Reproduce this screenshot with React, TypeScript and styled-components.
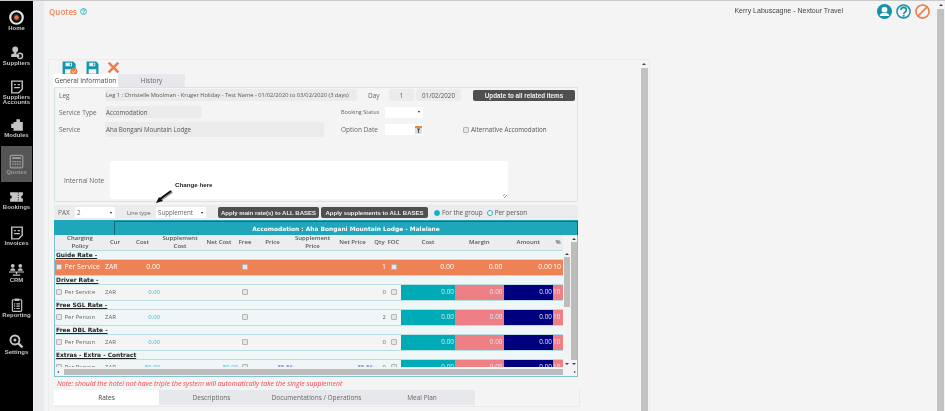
import React from "react";
import styled, { createGlobalStyle } from "styled-components";

const Global = createGlobalStyle`
  html, body { margin: 0; padding: 0; height: 100%; overflow: hidden; background: #f4f4f4; }
  * { box-sizing: border-box; }
  #root { font-family: "Open Sans", "Liberation Sans", sans-serif; font-size: 6.5px; color: #555; }
`;

const Shell = styled.div`
  display: flex; width: 945px; height: 411px; overflow: hidden;
  border-top: 1px solid #c9c9c9; background: #f4f4f4; filter: blur(0.3px);
`;
const Sidebar = styled.nav`
  width: 33px; flex: none; background: #000; display: flex; flex-direction: column; padding-top: 1px;
`;
const NavItem = styled.div<{ $active?: boolean }>`
  height: 36px; flex: none; display: flex; flex-direction: column; align-items: center; justify-content: center;
  margin: 0 1px; background: ${p => (p.$active ? "#555" : "transparent")};
  color: ${p => (p.$active ? "#9a9a9a" : "#c4c4c4")};
  svg { display: block; flex: none; }
`;
const NavLabel = styled.span`
  font-size: 6px; font-weight: 700; line-height: 5px; text-align: center; margin-top: 1px; white-space: nowrap;
  color: inherit; font-family: "Liberation Sans", sans-serif;
`;
const Gutter = styled.div`width: 11px; flex: none; background: #e9ebee;`;
const Main = styled.main`flex: 1; min-width: 0; padding-left: 4px; display: flex; flex-direction: column;`;
const Header = styled.header`
  height: 58px; flex: none; display: flex; align-items: flex-start; padding: 3px 0 0 1px;
`;
const Title = styled.h1`
  margin: 2px 0 0; font-size: 8px; font-weight: 600; line-height: 11px; color: #f0855c;
  display: flex; align-items: center; gap: 3px; font-family: "Open Sans", sans-serif;
`;
const UserBox = styled.div`margin-left: auto; display: flex; align-items: flex-start; padding-right: 6px;`;
const UserName = styled.span`
  font-size: 7px; line-height: 9px; color: #444; margin: 2px 34px 0 0; font-family: "Liberation Sans", sans-serif;
`;
const UserIcons = styled.div`display: flex; gap: 4px; svg { display: block; }`;
const PageScroll = styled.div`
  width: 9px; flex: none; display: flex; flex-direction: column; align-items: center; background: #f4f4f4;
`;
const PageThumb = styled.div`width: 7px; flex: 1; background: #c2c2c2; margin-top: 1px;`;
const Arrow = styled.span<{ $dir?: string }>`
  width: 0; height: 0; flex: none;
  border-left: 2px solid transparent; border-right: 2px solid transparent;
  ${p => p.$dir === "down" ? "border-top: 2px solid #444;" : "border-bottom: 2px solid #444;"}
`;
const ArrowBox = styled.div`height: 7px; flex: none; display: flex; align-items: center; justify-content: center; width: 100%;`;

const Panel = styled.section`
  position: relative; width: 602px; flex: 1; display: flex; border: 1px solid #ececec; border-bottom: 0; margin-top: 0;
`;
const PanelBody = styled.div`flex: 1; min-width: 0; padding-left: 5px;`;
const PanelScroll = styled.div`
  width: 8px; flex: none; margin-right: 1px; display: flex; flex-direction: column; align-items: center;
`;
const Toolbar = styled.div`
  height: 14px; display: flex; align-items: flex-start; padding: 1px 0 0 8px; gap: 8px; svg { display: block; }
`;
const Wrap = styled.div`width: 526px;`;
const TabRow = styled.div`display: flex; height: 13px;`;
const TabBtn = styled.div<{ $w: number; $active?: boolean }>`
  width: ${p => p.$w}px; display: flex; align-items: center; justify-content: center; white-space: nowrap;
  background: ${p => (p.$active ? "#fff" : "#e7e8eb")};
  color: ${p => (p.$active ? "#444" : "#666")};
  font-size: 6.5px;
`;
const TopTabs = styled(TabRow)`margin-left: -1px;`;
const FormBox = styled.div`
  width: 524px; height: 115px; border: 1px solid #d3e6e6; padding: 1px 0 0 4px;
`;
const FormRow = styled.div<{ $h: number; $mt?: number }>`
  display: flex; align-items: center; height: ${p => p.$h}px; margin-top: ${p => p.$mt ?? 0}px;
`;
const Label = styled.label<{ $w: number; $ml?: number; $pl?: number; $fs?: number }>`
  width: ${p => p.$w}px; margin-left: ${p => p.$ml ?? 0}px; padding-left: ${p => p.$pl ?? 0}px; flex: none; color: #666;
  font-size: ${p => p.$fs ?? 6.5}px; white-space: nowrap;
`;
const Field = styled.div<{ $w: number; $ml?: number; $center?: boolean; $fs?: number }>`
  width: ${p => p.$w}px; height: 100%; margin-left: ${p => p.$ml ?? 0}px; flex: none; background: #ebebeb; border-radius: 2px;
  display: flex; align-items: center; padding: 0 1px; white-space: nowrap; overflow: hidden; color: #555;
  font-size: ${p => p.$fs ?? 6.2}px;
  justify-content: ${p => (p.$center ? "center" : "flex-start")};
`;
const DarkBtn = styled.button<{ $w: number; $ml?: number; $fs?: number }>`
  width: ${p => p.$w}px; margin-left: ${p => p.$ml ?? 0}px; height: 11px; flex: none; background: #4f4f4f; color: #eee;
  border: 0; border-radius: 2px; padding: 0; font: 700 ${p => p.$fs ?? 6.3}px "Liberation Sans", sans-serif; white-space: nowrap;
`;
const SelectBox = styled.div<{ $w: number; $ml?: number }>`
  width: ${p => p.$w}px; margin-left: ${p => p.$ml ?? 0}px; height: 11px; flex: none; background: #fff; border-radius: 1px;
  display: flex; align-items: center; padding: 0 3px 0 2px; color: #666; font-size: 6.2px;
  &::after { content: ""; margin-left: auto; border-left: 1.5px solid transparent; border-right: 1.5px solid transparent; border-top: 2.5px solid #222; }
`;
const DateBox = styled.div<{ $w: number }>`
  width: ${p => p.$w}px; height: 11px; flex: none; background: #fff; display: flex; justify-content: flex-end; align-items: center; padding-right: 1px;
  svg { display: block; }
`;
const Check = styled.span<{ $ml?: number }>`
  display: inline-block; width: 6px; height: 6px; flex: none; margin-left: ${p => p.$ml ?? 0}px;
  background: #e6e6e6; border: 1px solid #b5b5b5; border-radius: 1px;
`;
const Note = styled.div`
  position: relative; width: 398px; height: 38px; flex: none; background: #fff; border-radius: 2px;
  &::after { content: ""; position: absolute; right: 1px; bottom: 1px; width: 4px; height: 4px;
    background: repeating-linear-gradient(135deg, transparent 0 1px, #999 1px 2px); }
`;
const AltLabel = styled.span`margin-left: 2px; color: #555; font-size: 6.3px; white-space: nowrap;`;
const Callout = styled.div`
  position: absolute; left: 126px; top: 120px; font: 700 6.2px/9px "Liberation Sans", sans-serif; color: #222; white-space: nowrap;
`;
const CalloutArrow = styled.svg`position: absolute; left: 107px; top: 130px; display: block;`;
const PaxBar = styled.div`
  width: 524px; height: 15px; margin-top: 3px; background: #ececee; display: flex; align-items: center; padding-left: 4px;
`;
const Radio = styled.span<{ $on?: boolean; $ml: number }>`
  width: 6px; height: 6px; border-radius: 50%; flex: none; margin-left: ${p => p.$ml}px; margin-right: 2px;
  background: ${p => (p.$on ? "#0fb0cc" : "#fff")}; border: 1px solid #19b3cc;
`;
const RadioText = styled.span`color: #555; white-space: nowrap; font-size: 6.4px;`;

const Frame = styled.div`
  width: 524px; height: 157px; border: 1px solid #7fc4cf; border-top: 0; display: flex; flex-direction: column; background: #f4f4f4;
`;
const TitleBar = styled.div`
  height: 15px; flex: none; display: flex; background: #1fa6ba; margin: 0 -1px;
`;
const TitleLeft = styled.div`width: 60px; flex: none;`;
const TitleMain = styled.div`
  flex: 1; margin-top: 1px; border: 1px solid #0d6b79; border-bottom: 0; color: #fff; font-weight: 700; font-size: 5.9px;
  display: flex; align-items: center; justify-content: center; font-family: "DejaVu Sans", sans-serif;
`;
const TableWrap = styled.div`flex: 1; min-height: 0; display: flex; flex-direction: column;`;
const TableTop = styled.div`flex: 1; min-height: 0; display: flex;`;
const TableInner = styled.div`flex: none; width: 508px; overflow: hidden; display: flex; flex-direction: column;`;
const cols = "50px 20px 35px 40px 38px 14px 41px 39px 41px 13px 15px 54px 48.5px 49.5px 10px";
const HeadRow = styled.div`
  display: grid; grid-template-columns: ${cols}; height: 15px; flex: none; background: #ebedef; align-items: center;
`;
const HeadCell = styled.div`
  text-align: center; font-size: 6px; line-height: 7.5px; color: #555; font-weight: 600; white-space: nowrap;
`;
const GroupRow = styled.div`
  height: 10px; flex: none; background: #eef6f7; color: #222; font-weight: 700; font-size: 5.9px; text-decoration: underline;
  padding-left: 1px; display: flex; align-items: center; border-top: 1px solid #b9dde1; border-bottom: 1px solid #b9dde1;
  font-family: "DejaVu Sans", sans-serif;
`;
const DataRow = styled.div<{ $tone: string }>`
  display: grid; grid-template-columns: ${cols}; height: 15px; flex: none; align-items: stretch;
  background: ${p => (p.$tone === "hot" ? "#ee8254" : p.$tone === "alt" ? "#f4f4f4" : "#eef6f7")};
  color: ${p => (p.$tone === "hot" ? "#fff" : "#666")};
  font-size: ${p => (p.$tone === "hot" ? "6.9px" : "6px")};
`;
const Cell = styled.div<{ $align?: string; $color?: string; $bg?: string; $pr?: number; $clip?: boolean }>`
  display: flex; align-items: center; white-space: nowrap; overflow: ${p => (p.$clip ? "hidden" : "visible")};
  justify-content: ${p => p.$align ?? "flex-start"};
  ${p => (p.$color ? `color: ${p.$color};` : "")}
  ${p => (p.$bg ? `background: ${p.$bg}; color: #dfe6f2; font-size: 6.4px;` : "")}
  padding: 0 ${p => p.$pr ?? 0}px 2px 0;
`;
const PolicyText = styled.span`margin-left: 2.5px;`;
const VScroll = styled.div<{ $mt?: number }>`
  width: 7px; flex: none; display: flex; flex-direction: column; align-items: center; margin-top: ${p => p.$mt ?? 0}px;
  background: #f3f3f3;
`;
const VThumb = styled.div<{ $h?: number }>`
  width: 6px; background: #bcbcbc; ${p => (p.$h ? `height: ${p.$h}px;` : "flex: 1;")}
`;
const Spacer = styled.div`flex: 1;`;
const HScroll = styled.div`height: 9px; flex: none; display: flex; align-items: center; background: #f3f3f3;`;
const HThumb = styled.div`width: 499px; height: 6px; background: #bcbcbc; margin-left: 5px;`;
const HArrow = styled.span<{ $dir: string }>`
  width: 0; height: 0; flex: none; border-top: 1.5px solid transparent; border-bottom: 1.5px solid transparent;
  ${p => (p.$dir === "left" ? "border-right: 2px solid #444; margin-left: 2px;" : "border-left: 2px solid #444; margin-left: 11px;")}
`;
const NoteLine = styled.div`
  width: 524px; height: 13px; display: flex; align-items: center; padding-left: 3px; color: #f5434f; font-style: italic; font-size: 6.9px; white-space: nowrap;
`;
const BottomWrap = styled.div`border-right: 1px solid #e9e9e9; border-bottom: 1px solid #e9e9e9; height: 17px;`;
const BottomTabs = styled(TabRow)`height: 15px; margin-left: 0;`;

const Svg: React.FC<{ s?: number; children: React.ReactNode }> = ({ s = 14, children }) => (
  <svg width={s} height={s} viewBox="0 0 24 24" fill="currentColor">{children}</svg>
);

const icons: Record<string, React.ReactNode> = {
  home: (
    <svg width="15" height="15" viewBox="0 0 24 24">
      <circle cx="12" cy="12" r="10" fill="none" stroke="#e6e6e6" strokeWidth="3.5" />
      <circle cx="12" cy="12" r="6.5" fill="#222" />
      <circle cx="12" cy="12" r="3.6" fill="#f0703a" />
    </svg>
  ),
  suppliers: (
    <Svg>
      <circle cx="9" cy="6" r="5" />
      <path d="M7 10h4v4l5 2v3H2v-4c0-1 5-2 5-2z" />
      <circle cx="17" cy="17" r="4.5" fill="none" stroke="currentColor" strokeWidth="2.4" />
    </Svg>
  ),
  accounts: (
    <Svg>
      <path d="M3 2h18v14l-6 6H3z" fill="none" stroke="currentColor" strokeWidth="2.4" />
      <path d="M7 8h3M13 8h4M7 13h10" stroke="currentColor" strokeWidth="2.2" />
    </Svg>
  ),
  modules: (
    <Svg>
      <path d="M11 2h6v5h5v15H6v-5H2v-7h4V7h5z" />
    </Svg>
  ),
  quotes: (
    <svg width="15" height="15" viewBox="0 0 24 24">
      <rect x="2" y="2" width="20" height="20" rx="2" fill="none" stroke="currentColor" strokeWidth="2" />
      <rect x="5" y="5" width="14" height="3" fill="currentColor" />
      <path d="M5 11h14v2H5zM5 15h14v2H5zM5 19h14v1H5z" fill="currentColor" />
      <path d="M8 10v11M12 10v11M16 10v11" stroke="#555" strokeWidth="1" />
    </svg>
  ),
  bookings: (
    <svg width="15" height="14" viewBox="0 0 24 24" fill="currentColor">
      <path d="M1 4h22v5a3 3 0 0 0 0 6v5H1v-5a3 3 0 0 0 0-6z" />
      <path d="M15 4v16" stroke="#000" strokeWidth="1.4" strokeDasharray="2 2" />
    </svg>
  ),
  invoices: (
    <Svg>
      <path d="M3 2h18v14l-6 6H3z" fill="none" stroke="currentColor" strokeWidth="2.4" />
      <path d="M7 8h3M13 8h4M7 13h10" stroke="currentColor" strokeWidth="2.2" />
    </Svg>
  ),
  crm: (
    <Svg s={15}>
      <circle cx="6" cy="6" r="3" />
      <circle cx="18" cy="6" r="3" />
      <path d="M2 14c0-3 2-4 4-4s4 1 4 4zM14 14c0-3 2-4 4-4s4 1 4 4z" />
      <path d="M0 15h24v1.6H0zM11 16h2v3h-2zM6 20h12v2H6z" />
    </Svg>
  ),
  reporting: (
    <Svg>
      <rect x="4" y="3" width="16" height="20" rx="1.5" fill="none" stroke="currentColor" strokeWidth="2" />
      <rect x="8" y="1" width="8" height="4" />
      <path d="M7 9h2v2H7zM11 9h6v2h-6zM7 13h2v2H7zM11 13h6v2h-6zM7 17h2v2H7zM11 17h6v2h-6z" />
    </Svg>
  ),
  settings: (
    <Svg s={15}>
      <circle cx="9.5" cy="9.5" r="7.2" fill="none" stroke="currentColor" strokeWidth="3" />
      <path d="M14.5 14.5l7 7" stroke="currentColor" strokeWidth="4" />
      <circle cx="9.5" cy="9.5" r="2.4" />
    </Svg>
  ),
};

const nav: [string, string, string?][] = [
  ["home", "Home"],
  ["suppliers", "Suppliers"],
  ["accounts", "Suppliers", "Accounts"],
  ["modules", "Modules"],
  ["quotes", "Quotes"],
  ["bookings", "Bookings"],
  ["invoices", "Invoices"],
  ["crm", "CRM"],
  ["reporting", "Reporting"],
  ["settings", "Settings"],
];

const Floppy: React.FC<{ badge?: boolean }> = ({ badge }) => (
  <svg width={badge ? 16 : 13} height="14" viewBox={badge ? "0 0 27 24" : "0 0 24 24"} preserveAspectRatio="none">
    <path fillRule="evenodd" fill="#1397ad" d="M1 1h18l4 4v18H1zM6 3v6h11V3zM5 14v8h14v-8z" />
    <rect x="13" y="4" width="2.4" height="4" fill="#1397ad" />
    {badge && <circle cx="20" cy="18" r="6" fill="#ee7d4c" />}
    {badge && <path d="M17 18l2.2 2.2 4-4" fill="none" stroke="#fff" strokeWidth="1.6" />}
  </svg>
);

const columns = ["Charging|Policy", "Cur", "Cost", "Supplement|Cost", "Net Cost", "Free", "Price", "Supplement|Price", "Net Price", "Qty", "FOC", "Cost", "Margin", "Amount", "%"];

type Row = { title: string; policy: string; tone: string; qty: string; cost?: string; net?: string; price?: string };
const rows: Row[] = [
  { title: "Guide Rate -", policy: "Per Service", tone: "hot", qty: "1", cost: "0.00" },
  { title: "Driver Rate -", policy: "Per Service", tone: "alt", qty: "0", cost: "0.00" },
  { title: "Free SGL Rate -", policy: "Per Person", tone: "plain", qty: "2", cost: "0.00" },
  { title: "Free DBL Rate -", policy: "Per Person", tone: "alt", qty: "0", cost: "0.00" },
  { title: "Extras - Extra - Contract", policy: "Per Person", tone: "plain", qty: "0", cost: "50.00", net: "50.00", price: "55.56" },
];

export default function App() {
  return (
    <Shell>
      <Global />
      <Sidebar>
        {nav.map(([k, a, b]) => (
          <NavItem key={k} $active={k === "quotes"}>
            {icons[k]}
            <NavLabel>{a}{b && <><br />{b}</>}</NavLabel>
          </NavItem>
        ))}
      </Sidebar>
      <Gutter />
      <Main>
        <Header>
          <Title>
            Quotes
            <svg width="7" height="7" viewBox="0 0 24 24">
              <circle cx="12" cy="12" r="10" fill="none" stroke="#27aac4" strokeWidth="3" />
              <path d="M9 9c0-4 7-4 7 0 0 3-4 3-4 6M12 17v2" fill="none" stroke="#27aac4" strokeWidth="3" />
            </svg>
          </Title>
          <UserBox>
            <UserName>Kerry Labuscagne - Nextour Travel</UserName>
            <UserIcons>
              <svg width="15" height="15" viewBox="0 0 24 24">
                <circle cx="12" cy="12" r="12" fill="#0f93a8" />
                <circle cx="12" cy="9" r="4.6" fill="#fff" />
                <path d="M4.5 19c0-4 4-4.5 7.5-4.5s7.5.5 7.5 4.5z" fill="#fff" />
              </svg>
              <svg width="15" height="15" viewBox="0 0 24 24">
                <circle cx="12" cy="12" r="10.5" fill="none" stroke="#0f93a8" strokeWidth="2.4" />
                <path d="M8 9.5c0-5.5 8.5-5.5 8.5 0 0 3.5-4.2 3.2-4.2 6.5" fill="none" stroke="#0f93a8" strokeWidth="2.6" />
                <rect x="10.8" y="17.5" width="3" height="3" fill="#0f93a8" />
              </svg>
              <svg width="15" height="15" viewBox="0 0 24 24">
                <circle cx="12" cy="12" r="10.5" fill="none" stroke="#ee7d4c" strokeWidth="2.6" />
                <path d="M5 19L19 5" stroke="#ee7d4c" strokeWidth="2.6" />
              </svg>
            </UserIcons>
          </UserBox>
        </Header>
        <Panel>
          <PanelBody>
            <Toolbar>
              <Floppy badge />
              <Floppy />
              <svg width="13" height="13" viewBox="0 0 24 24">
                <path d="M3 3l18 18M21 3L3 21" stroke="#ee7d4c" strokeWidth="4.6" />
              </svg>
            </Toolbar>
            <TopTabs>
              <TabBtn $w={65} $active>General Information</TabBtn>
              <TabBtn $w={67}>History</TabBtn>
            </TopTabs>
            <Wrap>
              <FormBox>
                <FormRow $h={12}>
                  <Label $w={46}>Leg</Label>
                  <Field $w={252} $fs={5.7}>Leg 1 : Christelle Moolman - Kruger Holiday - Test Name - 01/02/2020 to 03/02/2020 (3 days)</Field>
                  <Label $w={21} $ml={11}>Day</Label>
                  <Field $w={25} $center>1</Field>
                  <Field $w={45} $ml={2} $center>01/02/2020</Field>
                  <DarkBtn $w={102} $ml={12}>Update to all related items</DarkBtn>
                </FormRow>
                <FormRow $h={12} $mt={5}>
                  <Label $w={46}>Service Type</Label>
                  <Field $w={97}>Accomodation</Field>
                  <Label $w={44} $ml={139} $fs={5.5}>Booking Status</Label>
                  <SelectBox $w={38} />
                </FormRow>
                <FormRow $h={15} $mt={4}>
                  <Label $w={46}>Service</Label>
                  <Field $w={219}>Aha Bongani Mountain Lodge</Field>
                  <Label $w={44} $ml={17}>Option Date</Label>
                  <DateBox $w={38}>
                    <svg width="7" height="8" viewBox="0 0 7 8">
                      <rect width="7" height="8" fill="#ddd" />
                      <rect width="7" height="2" fill="#e8893e" />
                      <path d="M2 3h3M3.5 3v4" stroke="#444" strokeWidth="1" />
                    </svg>
                  </DateBox>
                  <Check $ml={40} />
                  <AltLabel>Alternative Accomodation</AltLabel>
                </FormRow>
                <FormRow $h={38} $mt={24}>
                  <Label $w={51} $pl={5}>Internal Note</Label>
                  <Note />
                </FormRow>
              </FormBox>
              <PaxBar>
                <Label $w={17}>PAX</Label>
                <SelectBox $w={40}>2</SelectBox>
                <Label $w={29} $ml={12} $fs={5.6}>Line type</Label>
                <SelectBox $w={50}>Supplement</SelectBox>
                <DarkBtn $w={101} $ml={12} $fs={6}>Apply main rate(s) to ALL BASES</DarkBtn>
                <DarkBtn $w={107} $ml={2} $fs={6}>Apply supplements to ALL BASES</DarkBtn>
                <Radio $on $ml={6} />
                <RadioText>For the group</RadioText>
                <Radio $ml={4} />
                <RadioText>Per person</RadioText>
              </PaxBar>
              <Frame>
                <TitleBar>
                  <TitleLeft />
                  <TitleMain>Accomodation : Aha Bongani Mountain Lodge - Malelane</TitleMain>
                </TitleBar>
                <TableWrap>
                  <TableTop>
                    <TableInner>
                      <HeadRow>
                        {columns.map((c, i) => (
                          <HeadCell key={i}>
                            {c.split("|").map((t, j) => <div key={j}>{t}</div>)}
                          </HeadCell>
                        ))}
                      </HeadRow>
                      {rows.map(r => {
                        const hot = r.tone === "hot";
                        return (
                          <React.Fragment key={r.title}>
                            <GroupRow>{r.title}</GroupRow>
                            <DataRow $tone={r.tone}>
                              <Cell><Check $ml={1} /><PolicyText>{r.policy}</PolicyText></Cell>
                              <Cell>{"ZAR"}</Cell>
                              <Cell $align="flex-end" $color={hot ? undefined : "#3fb0c4"}>{r.cost}</Cell>
                              <Cell />
                              <Cell $align="flex-end" $color="#3fb0c4">{r.net}</Cell>
                              <Cell $align="center"><Check /></Cell>
                              <Cell $align="flex-end" $color="#5a5aa8">{r.price}</Cell>
                              <Cell />
                              <Cell $align="flex-end" $color="#5a5aa8">{r.price}</Cell>
                              <Cell $align="flex-end">{r.qty}</Cell>
                              <Cell $align="center"><Check /></Cell>
                              {hot ? <Cell $align="flex-end" $pr={1}>0.00</Cell> : <Cell $align="flex-end" $pr={1} $bg="#00abb8">0.00</Cell>}
                              {hot ? <Cell $align="flex-end" $pr={1}>0.00</Cell> : <Cell $align="flex-end" $pr={1} $bg="#ee8085">0.00</Cell>}
                              {hot ? <Cell $align="flex-end" $pr={1}>0.00</Cell> : <Cell $align="flex-end" $pr={1} $bg="#00007e">0.00</Cell>}
                              {hot ? <Cell $clip>10</Cell> : <Cell $clip $bg="#ee8085">10</Cell>}
                            </DataRow>
                          </React.Fragment>
                        );
                      })}
                    </TableInner>
                    <VScroll $mt={15}>
                      <ArrowBox><Arrow /></ArrowBox>
                      <VThumb $h={50} />
                      <Spacer />
                      <ArrowBox><Arrow $dir="down" /></ArrowBox>
                    </VScroll>
                    <VScroll>
                      <ArrowBox><Arrow /></ArrowBox>
                      <VThumb />
                      <ArrowBox><Arrow $dir="down" /></ArrowBox>
                    </VScroll>
                  </TableTop>
                  <HScroll>
                    <HArrow $dir="left" />
                    <HThumb />
                    <HArrow $dir="right" />
                  </HScroll>
                </TableWrap>
              </Frame>
              <NoteLine>Note: should the hotel not have triple the system will automatically take the single supplement</NoteLine>
              <BottomWrap>
                <BottomTabs>
                  <TabBtn $w={105} $active>Rates</TabBtn>
                  <TabBtn $w={105}>Descriptions</TabBtn>
                  <TabBtn $w={105}>Documentations / Operations</TabBtn>
                  <TabBtn $w={106}>Meal Plan</TabBtn>
                </BottomTabs>
              </BottomWrap>
            </Wrap>
            <Callout>Change here</Callout>
            <CalloutArrow width="17" height="14" viewBox="0 0 17 14">
              <path d="M16 1.5L4 10" stroke="#999" strokeWidth="3" />
              <path d="M15 1L4 9" stroke="#111" strokeWidth="2" />
              <path d="M0 13l3-6 4 4z" fill="#111" />
            </CalloutArrow>
          </PanelBody>
          <PanelScroll>
            <ArrowBox><Arrow /></ArrowBox>
            <PageThumb />
          </PanelScroll>
        </Panel>
      </Main>
      <PageScroll>
        <ArrowBox><Arrow /></ArrowBox>
        <PageThumb />
      </PageScroll>
    </Shell>
  );
}
